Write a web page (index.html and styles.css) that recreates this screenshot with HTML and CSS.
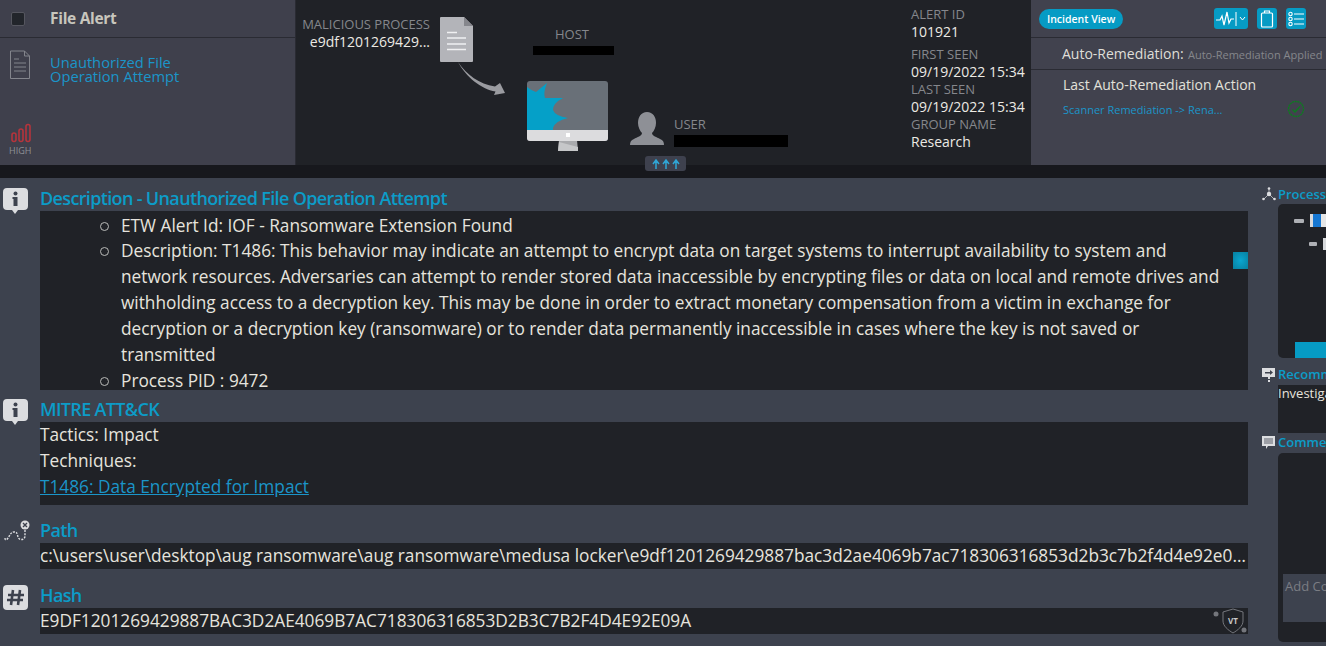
FILE: index.html
```html
<!DOCTYPE html>
<html lang="en">
<head>
<meta charset="utf-8">
<title>File Alert</title>
<link rel="stylesheet" href="styles.css">
</head>
<body>
<header class="top">
  <section class="summary">
    <div class="summary-head">
      <span class="check"></span>
      <span class="summary-title">File Alert</span>
    </div>
    <div class="summary-body">
      <div class="summary-icons">
        <svg class="doc-icon" width="22" height="30" viewBox="0 0 22 30" fill="none" stroke="#83858c" stroke-width="1"><path d="M1.500 1h14l5 5v22.500h-19z"/><path d="M15.500 1v5h5"/><path d="M5 9h5M5 13h12M5 17h12M5 21h12"/></svg>
        <div class="severity">
          <svg width="20" height="20" viewBox="0 0 20 20" fill="none" stroke="#b5343c" stroke-width="1.600"><rect x="1" y="10" width="4" height="8.500" rx="2"/><rect x="8" y="6" width="4" height="12.500" rx="2"/><rect x="15" y="1.500" width="4" height="17" rx="2"/></svg>
          <span>HIGH</span>
        </div>
      </div>
      <a class="summary-link">Unauthorized File Operation Attempt</a>
    </div>
  </section>
  <section class="diagram">
    <div class="node proc-text"><div class="label">MALICIOUS PROCESS</div><div class="value">e9df1201269429...</div></div>
    <svg class="node proc-icon" width="33" height="45" viewBox="0 0 33 45"><path d="M0 1a1 1 0 0 1 1-1h23l9 9v35a1 1 0 0 1-1 1H1a1 1 0 0 1-1-1z" fill="#b3b4b9"/><path d="M24 0l9 9h-9z" fill="#85868c"/><path d="M7 15.500h10M7 21h19M7 27h19M7 32.500h19" stroke="#f0f0f2" stroke-width="1.500"/></svg>
    <svg class="node arrow" width="50" height="36" viewBox="0 0 50 36"><path d="M1 0C10 13 22 22 38 24.500L43 21 48 31 37 33 38.500 29.500C24 27 9 15 1 0z" fill="#9a9ba0"/></svg>
    <div class="node host-text"><div class="label">HOST</div><div class="redact host-redact"></div></div>
    <svg class="node monitor" width="82" height="71" viewBox="0 0 82 71"><path d="M32 59h18l1 11H31z" fill="#a9aaad"/><path d="M31 70l1-9 19 5v4z" fill="#c6c7c9"/><rect width="81" height="60" rx="3" fill="#697078"/><path d="M0 49V6Q5 10 9 11L20 2Q16 12 18 17L36 17Q26 22 26 29 28 35 41 37 28 40 26 47V49z" fill="#05a0c8"/><path d="M0 49h81v8a3 3 0 0 1-3 3H3a3 3 0 0 1-3-3z" fill="#dcdcde"/><rect x="39" y="52" width="4" height="4" fill="#fff"/></svg>
    <svg class="node user-icon" width="34" height="33" viewBox="0 0 34 33"><path d="M17 0c6 0 9 5 9 11 0 4-2 8-4 10 0 3 5 4 8 6 3 1 4 3 4 6H0c0-3 1-5 4-6 3-2 8-3 8-6-2-2-4-6-4-10C8 5 11 0 17 0z" fill="#8e9096"/></svg>
    <div class="node user-text"><div class="label">USER</div><div class="redact user-redact"></div></div>
  </section>
  <section class="meta">
    <div class="label">ALERT ID</div><div class="value meta-first">101921</div>
    <div class="label">FIRST SEEN</div><div class="value">09/19/2022 15:34</div>
    <div class="label">LAST SEEN</div><div class="value">09/19/2022 15:34</div>
    <div class="label">GROUP NAME</div><div class="value">Research</div>
  </section>
  <section class="actions">
    <div class="actions-bar">
      <span class="pill">Incident View</span>
      <div class="tools">
        <span class="tool tool-wide"><svg width="30" height="16" viewBox="0 0 30 16" fill="none" stroke="#fff" stroke-width="1.200"><path d="M0 9h4l2-4 2 9 3-13 2 11 2-4h3"/><path d="M20 1v14M24 6l2.500 3L29 6" stroke-width="1"/></svg></span>
        <span class="tool"><svg width="14" height="18" viewBox="0 0 14 18" fill="none" stroke="#fff" stroke-width="1.200"><rect x="1.500" y="3" width="11" height="14" rx="1"/><path d="M4.500 3V1h5v2" /></svg></span>
        <span class="tool"><svg width="16" height="16" viewBox="0 0 16 16" fill="none" stroke="#fff" stroke-width="1.100"><circle cx="2.500" cy="3" r="1.700"/><circle cx="2.500" cy="8" r="1.700"/><circle cx="2.500" cy="13" r="1.700"/><path d="M6 3h10M6 8h10M6 13h10"/></svg></span>
      </div>
    </div>
    <div class="remed-row"><span class="remed-key">Auto-Remediation:</span> <span class="remed-val">Auto-Remediation Applied</span></div>
    <div class="remed-last">
      <div class="remed-title">Last Auto-Remediation Action</div>
      <div class="remed-item">
        <a class="remed-link">Scanner Remediation -&gt; Rena...</a>
        <svg width="18" height="18" viewBox="0 0 18 18" fill="none" stroke="#0b7d1e" stroke-width="1.300"><circle cx="9" cy="9" r="7.500" stroke-dasharray="2 .6"/><path d="M5.500 9.500l2.500 2.500 5-5.500"/></svg>
      </div>
    </div>
  </section>
</header>
<div class="strip"><span class="expand"><svg width="30" height="12" viewBox="0 0 30 12" fill="none" stroke="#2fa6d6" stroke-width="1.500"><path d="M5 11V3M2 6l3-4 3 4M15 11V3M12 6l3-4 3 4M25 11V3M22 6l3-4 3 4"/></svg></span></div>
<main class="main">
  <div class="details">
    <section class="block">
      <svg class="block-icon" width="25" height="27" viewBox="0 0 25 27"><path d="M4 0h17a4 4 0 0 1 4 4v14a4 4 0 0 1-4 4h-6l-3 4-3-4H4a4 4 0 0 1-4-4V4a4 4 0 0 1 4-4z" fill="#dcdde0"/><circle cx="12.500" cy="5.500" r="2" fill="#3d424e"/><path d="M9.500 9h5v9h-4v-7h-1z" fill="#3d424e"/></svg>
      <div class="block-main">
        <h2 class="block-title">Description - Unauthorized File Operation Attempt</h2>
        <div class="panel panel-desc">
          <ul class="desc-list">
            <li>ETW Alert Id: IOF - Ransomware Extension Found</li>
            <li>Description: T1486: This behavior may indicate an attempt to encrypt data on target systems to interrupt availability to system and network resources. Adversaries can attempt to render stored data inaccessible by encrypting files or data on local and remote drives and withholding access to a decryption key. This may be done in order to extract monetary compensation from a victim in exchange for decryption or a decryption key (ransomware) or to render data permanently inaccessible in cases where the key is not saved or transmitted</li>
            <li>Process PID : 9472</li>
          </ul>
          <span class="scroll-thumb"></span>
        </div>
      </div>
    </section>
    <section class="block block-mitre">
      <svg class="block-icon" width="25" height="27" viewBox="0 0 25 27"><path d="M4 0h17a4 4 0 0 1 4 4v14a4 4 0 0 1-4 4h-6l-3 4-3-4H4a4 4 0 0 1-4-4V4a4 4 0 0 1 4-4z" fill="#dcdde0"/><circle cx="12.500" cy="5.500" r="2" fill="#3d424e"/><path d="M9.500 9h5v9h-4v-7h-1z" fill="#3d424e"/></svg>
      <div class="block-main">
        <h2 class="block-title">MITRE ATT&amp;CK</h2>
        <div class="panel panel-mitre">
          <div>Tactics: Impact</div>
          <div>Techniques:</div>
          <a class="mitre-link">T1486: Data Encrypted for Impact</a>
        </div>
      </div>
    </section>
    <section class="block block-path">
      <svg class="block-icon" width="27" height="27" viewBox="0 0 27 27" fill="none" stroke="#dcdde0" stroke-width="1.400"><circle cx="22" cy="5" r="4.500" fill="#dcdde0" stroke="none"/><path d="M20 3l4 4M24 3l-4 4" stroke="#3d424e"/><path d="M22 10v6c0 4-6 5-7 1s-1-5-4-5-4 3-6 6-3 2-3 0" stroke-dasharray="2 1.200"/></svg>
      <div class="block-main">
        <h2 class="block-title">Path</h2>
        <div class="panel panel-line">c:\users\user\desktop\aug ransomware\aug ransomware\medusa locker\e9df1201269429887bac3d2ae4069b7ac718306316853d2b3c7b2f4d4e92e09a.exe</div>
      </div>
    </section>
    <section class="block block-hash">
      <svg class="block-icon" width="25" height="25" viewBox="0 0 25 25"><rect width="25" height="25" rx="4" fill="#dcdde0"/><path d="M10 5L8 20M17 5l-2 15M5 10h16M4 15h16" stroke="#3d424e" stroke-width="2.600"/></svg>
      <div class="block-main">
        <h2 class="block-title">Hash</h2>
        <div class="panel panel-line panel-hash">E9DF1201269429887BAC3D2AE4069B7AC718306316853D2B3C7B2F4D4E92E09A
          <svg class="vt" width="34" height="26" viewBox="0 0 34 26"><path d="M10 4l10-3 10 3v9c0 5-5 9-10 12-5-3-10-7-10-12z" fill="none" stroke="#74767c"/><circle cx="3" cy="6" r="2.500" fill="#74767c"/><circle cx="31" cy="22" r="2.500" fill="#74767c"/><text x="20" y="16" text-anchor="middle" class="vt-text">VT</text></svg>
        </div>
      </div>
    </section>
  </div>
  <aside class="side">
    <h3 class="side-title">
      <svg width="14" height="14" viewBox="0 0 14 14" fill="#dcdde0"><circle cx="7" cy="7" r="2.200"/><circle cx="7" cy="1.500" r="1.300"/><circle cx="1.500" cy="12" r="1.300"/><circle cx="12.500" cy="12" r="1.300"/><path d="M7 2v4M7 7l-5 5M7 7l5 5" stroke="#dcdde0" stroke-width=".7"/></svg>
      <span>Process Tree</span>
    </h3>
    <div class="side-panel tree-panel">
      <div class="tree-row"><i class="dash"></i><i class="tree-file"></i></div>
      <div class="tree-row tree-row-2"><i class="dash"></i><i class="tree-file tree-file-2"></i></div>
      <span class="tree-thumb"></span>
    </div>
    <h3 class="side-title side-rec">
      <svg width="14" height="15" viewBox="0 0 14 15"><path d="M0 1h13v9H8v2H6v-2H0z" fill="#dcdde0"/><path d="M6 13h2v2H6z" fill="#dcdde0"/><path d="M3 5h5V3l3 2.500L8 8V6.500H3z" fill="#3d424e"/></svg>
      <span>Recommendation</span>
    </h3>
    <div class="rec-text">Investigate</div>
    <h3 class="side-title side-com">
      <svg width="14" height="13" viewBox="0 0 14 13"><path d="M0 0h13v10H6l-2 3v-3H0z" fill="#dcdde0"/><path d="M2 3h9M2 5h9M2 7h9" stroke="#3d424e" stroke-width=".8"/></svg>
      <span>Comments</span>
    </h3>
    <div class="side-panel comment-panel"><textarea class="comment-input" placeholder="Add Comment"></textarea></div>
  </aside>
</main>
</body>
</html>
```
FILE: styles.css
```css
* { box-sizing: border-box; }
html, body { margin: 0; height: 646px; overflow: hidden; }
body { background: #3d424e; color: #eee; font-family: "Open Sans", "Noto Sans", sans-serif; }
a { cursor: pointer; }

.top { display: flex; height: 165px; background: #202227; }
.label { color: #85878c; font-size: 13px; line-height: 17px; }
.value { color: #eceae4; font-size: 14px; line-height: 18px; }

.summary { width: 296px; background: #3f404c; border-right: 1px solid #2a2b33; }
.summary-head { display: flex; align-items: center; height: 38px; border-bottom: 1px solid #2a2b33; padding-left: 11px; }
.check { width: 14px; height: 14px; background: #22252b; border: 1px solid #55565f; border-radius: 2px; }
.summary-title { margin-left: 25px; padding-bottom: 2px; font-size: 15.500px; font-weight: 700; color: #c8c6bd; letter-spacing: -.3px; }
.summary-body { display: flex; height: 126px; }
.summary-icons { width: 50px; padding: 12px 0 0 9px; display: flex; flex-direction: column; flex: none; }
.severity { margin-top: 43px; display: flex; flex-direction: column; align-items: flex-start; font-size: 9px; line-height: 12px; color: #8e9096; gap: 2px; }
.severity svg { margin-left: 2px; }
.summary-link { padding-top: 17px; width: 160px; color: #1b95c9; font-size: 14.700px; line-height: 14px; }

.diagram { position: relative; width: 615px; }
.node { position: absolute; }
.proc-text { left: 6px; top: 16px; width: 128px; text-align: right; }
.proc-icon { left: 144px; top: 17px; }
.arrow { left: 161px; top: 62px; }
.host-text { left: 236px; top: 26px; width: 80px; text-align: center; }
.redact { background: #000; }
.host-redact { width: 81px; height: 9px; margin: 3px 0 0 1px; }
.monitor { left: 231px; top: 81px; }
.user-icon { left: 334px; top: 112px; }
.user-text { left: 378px; top: 116px; }
.user-redact { width: 114px; height: 12px; margin-top: 2px; }

.meta { width: 120px; padding-top: 6px; background: #202227; }
.meta-first { margin-bottom: 5px; }

.actions { flex: 1; background: #41424e; }
.actions-bar { display: flex; align-items: center; justify-content: space-between; height: 38px; border-bottom: 1px solid #2a2b33; padding: 0 20px 0 8px; }
.pill { background: #069bc4; color: #fff; font-size: 10.500px; font-weight: 600; border-radius: 11px; padding: 0 8px; line-height: 20px; }
.tools { display: flex; gap: 9px; }
.tool { display: flex; align-items: center; justify-content: center; width: 20px; height: 21px; border-radius: 3px; background: #069bc4; }
.tool-wide { width: 34px; }
.remed-row { height: 32px; border-bottom: 1px solid #2a2b33; padding-left: 31px; line-height: 31px; white-space: nowrap; }
.remed-key { font-size: 14px; color: #dfded8; }
.remed-val { font-size: 11px; color: #85878c; }
.remed-last { padding: 5px 0 0 32px; }
.remed-title { font-size: 14px; line-height: 20px; color: #e2e1da; }
.remed-item { display: flex; align-items: center; justify-content: space-between; width: 242px; margin-top: 5px; }
.remed-link { font-size: 11px; color: #1b95c9; }

.strip { position: relative; height: 13px; background: #17181d; }
.expand { position: absolute; left: 645px; top: -9px; display: flex; align-items: center; justify-content: center; width: 41px; height: 15px; background: #3e414e; border-radius: 3px; }

.main { display: flex; height: 468px; padding-top: 8px; }
.details { width: 1248px; flex: none; }
.block { display: flex; }
.block-icon { flex: none; margin: 2px 0 0 3px; }
.block-main { margin-left: 12px; flex: 1; min-width: 0; }
.block-title { margin: 0 0 1px; font-size: 18px; font-weight: 600; line-height: 24px; color: #0c9cc8; letter-spacing: -.65px; }
.panel { position: relative; background: #202227; font-size: 17.250px; line-height: 26px; color: #e6e4de; }
.panel-desc { height: 179px; overflow: hidden; }
.desc-list { margin: 0; padding: 2px 20px 0 81px; list-style: none; }
.desc-list li { position: relative; }
.desc-list li::before { content: ""; position: absolute; left: -21px; top: 9px; width: 7px; height: 7px; border: 1.500px solid #b9bab8; border-radius: 50%; }
.desc-list li:first-child { margin-bottom: -1px; }
.scroll-thumb { position: absolute; right: 0; top: 41px; width: 15px; height: 17px; background: radial-gradient(#0aa6cf, #077f9f); }
.block-mitre { margin-top: 7px; }
.panel-mitre { height: 83px; }
.mitre-link { color: #1b95c9; text-decoration: underline; }
.block-path { margin-top: 13px; }
.block-path .block-main { margin-left: 10px; }
.block-hash { margin-top: 14px; }
.panel-line { height: 26px; white-space: nowrap; overflow: hidden; text-overflow: ellipsis; }
.vt { position: absolute; right: 1px; top: 0; }
.vt-text { font-size: 8px; font-weight: 700; fill: #c8c8c8; font-family: "Open Sans", sans-serif; }

.side { flex: 1; min-width: 0; padding-left: 14px; white-space: nowrap; overflow: hidden; }
.side-title { display: flex; align-items: center; gap: 2px; margin: 0; font-size: 13px; font-weight: 600; line-height: 16px; color: #0c9cc8; }
.side-title svg { flex: none; }
.side-panel { background: #202227; border-radius: 5px 0 0 5px; margin-left: 16px; position: relative; overflow: hidden; }
.tree-panel { height: 154px; margin-top: 2px; }
.tree-row { display: flex; align-items: center; gap: 6px; padding: 10px 0 0 16px; }
.tree-row-2 { padding: 11px 0 0 31px; }
.dash { width: 10px; height: 4px; background: #aeb0b5; border-radius: 1px; }
.tree-file { width: 16px; height: 13px; background: linear-gradient(90deg, #d7d9dc 20%, #1677d2 20%, #1677d2 70%, #e6e6e6 70%); }
.tree-file-2 { background: #d7d9dc; width: 3px; height: 12px; }
.tree-thumb { position: absolute; left: 17px; bottom: 0; right: 0; height: 16px; background: #069bc4; }
.side-rec { margin-top: 8px; }
.rec-text { margin: 3px 0 0 16px; height: 48px; background: #202227; font-size: 13px; line-height: 17px; color: #e6e4de; }
.side-com { margin-top: 1px; }
.comment-panel { height: 189px; margin-top: 3px; }
.comment-input { position: absolute; left: 5px; top: 121px; width: 200px; height: 48px; border: 0; outline: 0; resize: none; background: #3d424e; padding: 3px 2px; font: 13px "Open Sans", sans-serif; overflow: hidden; }
.comment-input::placeholder { color: #7b7d84; }
```
